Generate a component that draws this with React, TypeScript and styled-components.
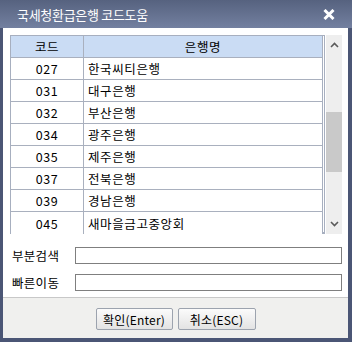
import React, { FC } from 'react';
import styled, { createGlobalStyle } from 'styled-components';

const GlobalStyle = createGlobalStyle`
  html, body {
    margin: 0;
    padding: 0;
    background: #ffffff;
  }
  * {
    box-sizing: border-box;
  }
`;

const FONT = `"Noto Sans CJK KR", "Liberation Sans", sans-serif`;

const Window = styled.div`
  width: 352px;
  height: 342px;
  display: flex;
  flex-direction: column;
  background: #4b5675;
  padding: 0 4px 4px 3px;
  font-family: ${FONT};
  color: #000;
`;

const TitleBar = styled.div`
  height: 28px;
  margin: 0 -4px 0 -3px;
  padding: 0 17px 0 17px;
  display: flex;
  align-items: center;
  justify-content: space-between;
  background: linear-gradient(#56627f, #7380a0);
  color: #ffffff;
  font-size: 13px;
  letter-spacing: -0.3px;
`;

const CloseButton = styled.button`
  width: 13px;
  height: 13px;
  padding: 0;
  border: none;
  background: none;
  display: flex;
  align-items: center;
  justify-content: center;
  cursor: pointer;
`;

const Body = styled.div`
  flex: 1;
  background: #ffffff;
  padding: 7px 6px 0 7px;
  display: flex;
  flex-direction: column;
`;

const ListArea = styled.div`
  display: flex;
  gap: 1px;
  height: 199px;
`;

const Grid = styled.div`
  width: 315px;
  border: 1px solid #a7afbf;
  border-bottom-width: 2px;
  padding-right: 1px;
`;

const GridInner = styled.div`
  border-right: 1px solid #a7afbf;
  height: 100%;
`;

const GridRow = styled.div<{ $header?: boolean }>`
  display: grid;
  grid-template-columns: 72px 1fr;
  height: 22px;
  background: ${({ $header }) => ($header ? '#cadcf4' : '#ffffff')};
  border-bottom: 1px solid #a9b0be;
  font-size: 12.5px;

  &:last-child {
    border-bottom: none;
  }
`;

const Cell = styled.div<{ $align?: 'left' | 'center' }>`
  display: flex;
  align-items: center;
  justify-content: ${({ $align }) => ($align === 'left' ? 'flex-start' : 'center')};
  padding-left: ${({ $align }) => ($align === 'left' ? '4px' : '0')};
  letter-spacing: 0.6px;

  & + & {
    border-left: 1px solid #a9b0be;
  }
`;

const ScrollBar = styled.div`
  width: 16px;
  height: 199px;
  background: #eeeeee;
  position: relative;
  display: flex;
  flex-direction: column;
  justify-content: space-between;
`;

const ScrollArrow = styled.div`
  height: 20px;
  display: flex;
  align-items: center;
  justify-content: center;
`;

const ScrollThumb = styled.div`
  position: absolute;
  left: 0;
  right: 0;
  top: 77px;
  height: 60px;
  background: #c9c9c9;
`;

const Form = styled.div`
  margin-top: 12px;
  display: flex;
  flex-direction: column;
  gap: 8px;
`;

const FormRow = styled.label`
  display: flex;
  align-items: center;
  font-size: 12.5px;
  letter-spacing: 0.3px;
`;

const FormLabel = styled.span`
  width: 65px;
  padding-left: 2px;
`;

const TextInput = styled.input`
  width: 267px;
  height: 17px;
  border: 1px solid #7f7f7f;
  padding: 0 3px;
  font-family: ${FONT};
  font-size: 12px;
  outline: none;
`;

const Footer = styled.div`
  height: 41px;
  border-top: 1px solid #c8c8c8;
  background: #f0f0ee;
  display: flex;
  justify-content: center;
  align-items: flex-start;
  padding-top: 10px;
  gap: 5px;
`;

const Button = styled.button<{ $width: number }>`
  width: ${({ $width }) => $width}px;
  height: 22px;
  border: 1px solid #9ca3ae;
  border-radius: 2px;
  background: linear-gradient(#fbfbfb, #e3e3e3);
  font-family: ${FONT};
  font-size: 12px;
  color: #000;
  padding: 0;
  letter-spacing: 0.2px;
  cursor: pointer;
`;

const BANKS: [string, string][] = [
  ['027', '한국씨티은행'],
  ['031', '대구은행'],
  ['032', '부산은행'],
  ['034', '광주은행'],
  ['035', '제주은행'],
  ['037', '전북은행'],
  ['039', '경남은행'],
  ['045', '새마을금고중앙회'],
];

const Chevron: FC<{ up?: boolean }> = ({ up }) => (
  <svg width="9" height="6" viewBox="0 0 9 6">
    <path
      d={up ? 'M1 5 L4.5 1.5 L8 5' : 'M1 1 L4.5 4.5 L8 1'}
      fill="none"
      stroke="#5a5a5a"
      strokeWidth="1.6"
    />
  </svg>
);

export default function App() {
  return (
    <Window>
      <GlobalStyle />
      <TitleBar>
        <span>국세청환급은행 코드도움</span>
        <CloseButton type="button" aria-label="닫기">
          <svg width="12" height="11" viewBox="0 0 12 11">
            <path d="M1.5 1 L10.5 10 M10.5 1 L1.5 10" stroke="#fff" strokeWidth="3" />
          </svg>
        </CloseButton>
      </TitleBar>
      <Body>
        <ListArea>
          <Grid>
            <GridInner>
              <GridRow $header>
                <Cell>코드</Cell>
                <Cell>은행명</Cell>
              </GridRow>
              {BANKS.map(([code, name]) => (
                <GridRow key={code}>
                  <Cell>{code}</Cell>
                  <Cell $align="left">{name}</Cell>
                </GridRow>
              ))}
            </GridInner>
          </Grid>
          <ScrollBar>
            <ScrollArrow>
              <Chevron up />
            </ScrollArrow>
            <ScrollThumb />
            <ScrollArrow>
              <Chevron />
            </ScrollArrow>
          </ScrollBar>
        </ListArea>
        <Form>
          <FormRow>
            <FormLabel>부분검색</FormLabel>
            <TextInput />
          </FormRow>
          <FormRow>
            <FormLabel>빠른이동</FormLabel>
            <TextInput />
          </FormRow>
        </Form>
      </Body>
      <Footer>
        <Button type="button" $width={77}>
          확인(Enter)
        </Button>
        <Button type="button" $width={78}>
          취소(ESC)
        </Button>
      </Footer>
    </Window>
  );
}
